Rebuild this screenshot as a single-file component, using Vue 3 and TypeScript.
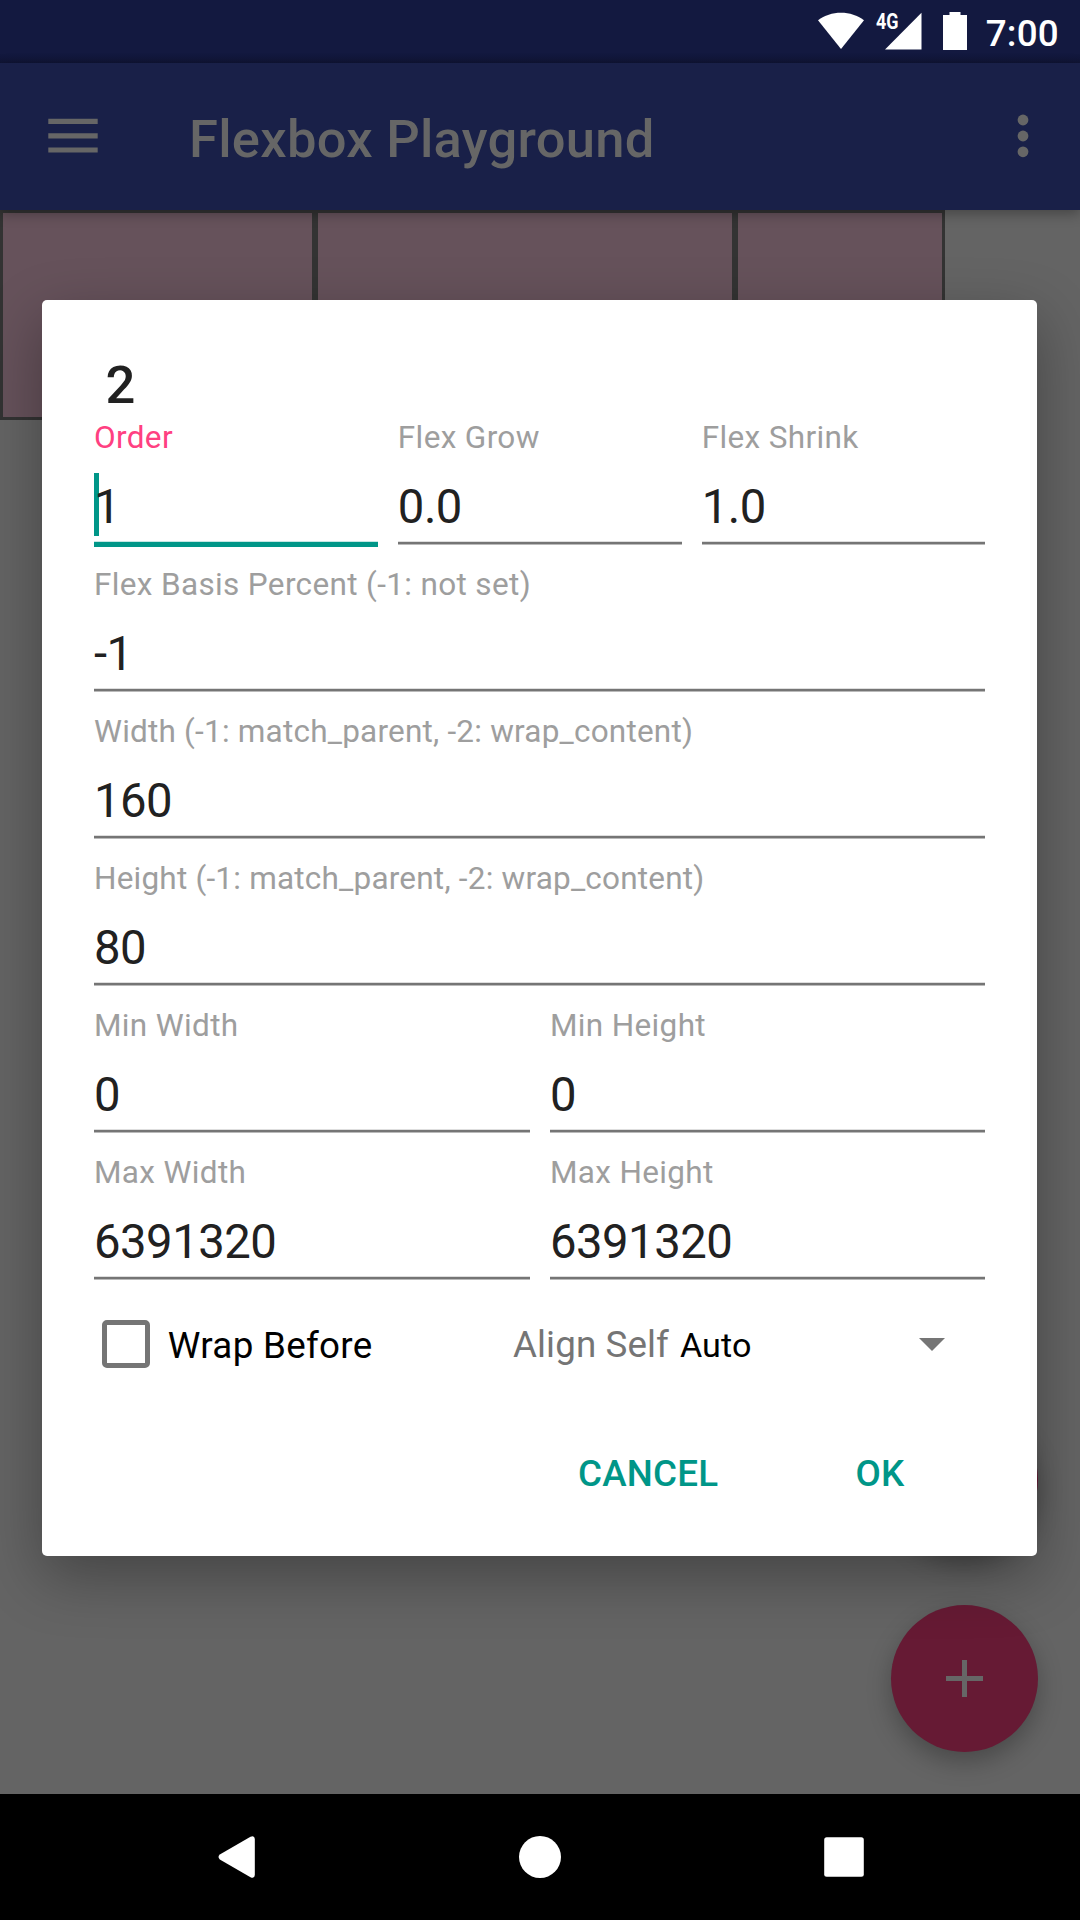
<script setup lang="ts">
interface Field {
  label: string
  value: string
  focused?: boolean
}

const tiles: number[] = [315, 420, 210]

const rows: Field[][] = [
  [
    { label: 'Order', value: '1', focused: true },
    { label: 'Flex Grow', value: '0.0' },
    { label: 'Flex Shrink', value: '1.0' },
  ],
  [{ label: 'Flex Basis Percent (-1: not set)', value: '-1' }],
  [{ label: 'Width (-1: match_parent, -2: wrap_content)', value: '160' }],
  [{ label: 'Height (-1: match_parent, -2: wrap_content)', value: '80' }],
  [
    { label: 'Min Width', value: '0' },
    { label: 'Min Height', value: '0' },
  ],
  [
    { label: 'Max Width', value: '6391320' },
    { label: 'Max Height', value: '6391320' },
  ],
]
</script>

<template>
  <div class="screen">
    <header class="status">
      <svg class="wifi" width="48" height="38" viewBox="0 0 48 38">
        <path d="M1 8.3C7.5 3.4 15.5.8 24 .8S40.500 3.400 47 8.300L24 37Z" />
      </svg>
      <svg class="signal" width="46" height="38" viewBox="0 0 46 38">
        <path d="M45.500.800V37.500H9Z" />
        <text x="0" y="17.200" textLength="22.500" lengthAdjust="spacingAndGlyphs">4G</text>
      </svg>
      <svg class="battery" width="24" height="38" viewBox="0 0 24 38">
        <path d="M6.500 0h11v3H24v35H0V3h6.500Z" />
      </svg>
      <span class="clock">7:00</span>
    </header>

    <div class="appbar">
      <svg class="menu" width="50" height="36" viewBox="0 0 50 36">
        <path d="M.300.700h49.400v5.200H.300zM.300 15.200h49.400v5.200H.300zM.300 29.400h49.400v5.200H.300z" />
      </svg>
      <h1>Flexbox Playground</h1>
      <svg class="more" width="12" height="44" viewBox="0 0 12 44">
        <circle cx="6" cy="6" r="5.400" />
        <circle cx="6" cy="22" r="5.400" />
        <circle cx="6" cy="37.800" r="5.400" />
      </svg>
    </div>

    <main class="canvas">
      <div class="tiles">
        <div v-for="(w, i) in tiles" :key="i" class="tile" :style="{ width: w + 'px' }"></div>
      </div>
      <div class="fabs">
        <div class="fab"></div>
        <div class="fab">
          <svg width="37" height="37" viewBox="0 0 37 37">
            <path d="M16 0h5v16h16v5H21v16h-5V21H0v-5h16z" />
          </svg>
        </div>
      </div>
    </main>

    <nav class="navbar">
      <svg width="38" height="42" viewBox="0 0 38 42">
        <path d="M1.800 18.600 32.500.800Q36.500-1 36.800 3V39Q36.500 43 32.500 41.200L1.800 23.400Q-.800 21 1.800 18.600Z" />
      </svg>
      <svg width="42" height="42" viewBox="0 0 42 42"><circle cx="21" cy="21" r="21" /></svg>
      <svg width="40" height="40" viewBox="0 0 40 40">
        <rect x=".200" y=".300" width="39.600" height="39.400" rx="2.500" />
      </svg>
    </nav>

    <section class="dialog">
      <h2>2</h2>
      <div v-for="(row, r) in rows" :key="r" class="row">
        <div v-for="f in row" :key="f.label" class="field" :class="{ focused: f.focused }">
          <div class="label" :class="{ long: f.label.length > 35 }">{{ f.label }}</div>
          <div class="value"><span>{{ f.value }}</span></div>
          <div class="line"></div>
        </div>
      </div>
      <div class="options">
        <div class="check">
          <span class="box"></span>
          <span class="wrap">Wrap Before</span>
        </div>
        <div class="align">
          <span class="caption">Align Self</span>
          <span class="choice">Auto</span>
          <svg width="26" height="13" viewBox="0 0 26 13"><path d="M0 0h26L13 13z" /></svg>
        </div>
      </div>
      <div class="actions">
        <span class="cancel">CANCEL</span>
        <span class="ok">OK</span>
      </div>
    </section>
  </div>
</template>

<style scoped>
.screen {
  position: relative;
  display: flex;
  flex-direction: column;
  width: 1080px;
  height: 1920px;
  overflow: hidden;
  background: #646464;
  font-family: Roboto, "Liberation Sans", sans-serif;
}
svg {
  display: block;
  flex: none;
  overflow: visible;
}
.status {
  display: flex;
  height: 63px;
  box-sizing: border-box;
  padding: 12px 21px 0 0;
  justify-content: flex-end;
  background: linear-gradient(#131940 0, #131940 53px, #11163a 59px, #0f1434 63px);
  fill: #fff;
}
.signal {
  margin-left: 11px;
}
.signal text {
  font-size: 22.5px;
  font-weight: 700;
}
.battery {
  margin-left: 21px;
}
.clock {
  margin-left: 19px;
  line-height: 43px;
  color: #fff;
  font-size: 36.75px;
  font-weight: 500;
  letter-spacing: 0.25px;
}
.appbar {
  position: relative;
  z-index: 1;
  display: flex;
  align-items: center;
  height: 147px;
  box-sizing: border-box;
  padding: 0 51.500px 0 48px;
  background: #192048;
  fill: #666;
  box-shadow: 0 4px 12px rgba(0, 0, 0, 0.3);
}
.menu {
  margin-bottom: 2px;
}
.more {
  margin-bottom: 1px;
}
h1 {
  margin: 5px 0 0 91px;
  flex: 1;
  color: #666;
  font-size: 52.5px;
  font-weight: 500;
  line-height: 62px;
  letter-spacing: 0.27px;
}
.canvas {
  display: flex;
  flex-direction: column;
  justify-content: space-between;
  height: 1584px;
}
.tiles {
  display: flex;
}
.tile {
  box-sizing: border-box;
  height: 210px;
  border: 3px solid #333;
  background: #66525b;
}
.fabs {
  display: flex;
  flex-direction: column;
  align-items: flex-end;
  gap: 52px;
  padding: 0 42px 42px 0;
}
.fab {
  display: flex;
  align-items: center;
  justify-content: center;
  width: 147px;
  height: 147px;
  border-radius: 50%;
  background: #661a34;
  fill: #666;
  box-shadow: 0 10px 24px rgba(0, 0, 0, 0.27);
}
.navbar {
  display: flex;
  align-items: center;
  justify-content: space-between;
  height: 126px;
  box-sizing: border-box;
  padding: 0 216px 0 217.600px;
  background: #000;
  fill: #fff;
}
.dialog {
  position: absolute;
  z-index: 2;
  left: 42px;
  top: 300px;
  width: 995px;
  height: 1256px;
  box-sizing: border-box;
  padding: 54px 52px 0;
  border-radius: 5px;
  background: #fff;
  box-shadow: 0 20px 60px rgba(0, 0, 0, 0.32);
}
h2 {
  margin: 0;
  padding-left: 11.500px;
  color: #212121;
  font-size: 52.5px;
  font-weight: 500;
  line-height: 62px;
}
.row {
  display: flex;
  gap: 20px;
  height: 147px;
}
.field {
  flex: 1 1 0;
  min-width: 0;
}
.field:not(:last-child) {
  flex-grow: 1.002;
}
.label {
  height: 59px;
  color: #9e9e9e;
  font-size: 31.5px;
  line-height: 43px;
  letter-spacing: 0.35px;
  white-space: nowrap;
}
.label.long {
  letter-spacing: 0.21px;
}
.value {
  position: relative;
  height: 63px;
  color: #212121;
  font-size: 47.25px;
  line-height: 65px;
  letter-spacing: -0.5px;
}
.value span {
  position: relative;
}
.line {
  height: 4px;
  margin-top: 3px;
  background: linear-gradient(#dedede 1px, #757575 1px, #757575 3px, #bababa 3px);
}
.focused .label {
  color: #ff4081;
}
.focused .line {
  height: 6px;
  background: linear-gradient(#c5e7e4 1px, #009688 1px);
}
.focused .value::before {
  content: "";
  position: absolute;
  left: 0;
  top: -2px;
  width: 5px;
  height: 63px;
  background: #009688;
}
.options {
  display: flex;
  height: 94px;
}
.check {
  display: flex;
  align-items: center;
  width: 419px;
}
.box {
  box-sizing: border-box;
  width: 47.500px;
  height: 47.500px;
  margin: -2px 0 0 8.300px;
  border: 5.250px solid #757575;
  border-radius: 5px;
}
.wrap {
  margin-left: 18px;
  color: #000;
  font-size: 36.75px;
  letter-spacing: 0.3px;
}
.align {
  display: flex;
  flex: 1;
  align-items: baseline;
  line-height: 94px;
}
.caption {
  color: #757575;
  font-size: 36.75px;
  letter-spacing: 0.1px;
}
.choice {
  flex: 1;
  margin-left: 11px;
  color: #000;
  font-size: 34.125px;
  letter-spacing: 0.1px;
}
.align svg {
  align-self: flex-start;
  margin: 40px 40px 0 0;
  fill: #757575;
}
.actions {
  display: flex;
  justify-content: flex-end;
  gap: 137px;
  height: 126px;
  margin-top: 18px;
  padding-right: 80.500px;
  color: #009688;
  font-size: 36.75px;
  font-weight: 500;
  line-height: 128px;
  letter-spacing: 0.25px;
}
</style>

<style>
body {
  margin: 0;
}
</style>
